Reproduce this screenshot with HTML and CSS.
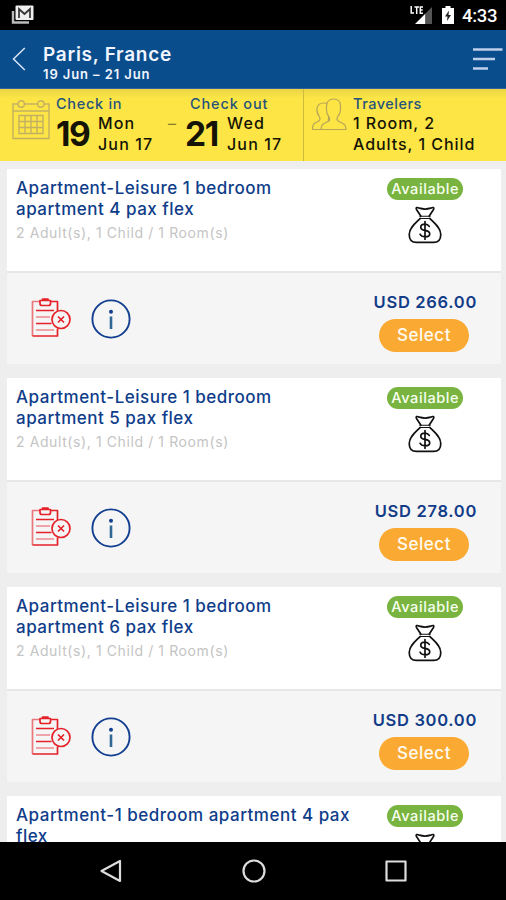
FILE: index.html
```html
<!DOCTYPE html>
<html lang="en">
<head>
<meta charset="utf-8">
<title>Paris, France</title>
<link rel="stylesheet" href="styles.css">
</head>
<body>
<svg class="defs" aria-hidden="true">
  <symbol id="bag" viewBox="0 0 36 40">
    <g fill="none" stroke="#111" stroke-width="1.8" stroke-linejoin="round" stroke-linecap="round">
      <path d="M13.500 10.500 9 3.500C8 1.500 9.500 .8 12 2.200Q18 4 24 2.200C26.500 .8 28 1.500 27 3.500L22.500 10.500"/>
      <path d="M12.500 10.800H23.500M12.500 13.200H23.500" stroke-width="1.100"/>
      <path d="M13 13C8 18 1.300 23 1.300 30Q1.300 38.500 9 38.500H27Q34.700 38.500 34.700 30C34.700 23 28 18 23 13"/>
      <path d="M22.500 21.500Q21 19 18 19Q13.500 19 13.500 22.300Q13.500 24.900 18 25.700Q23 26.500 23 29.500Q23 32.500 18 32.500Q14 32.500 12.800 29.800M18 16.300V35"/>
    </g>
  </symbol>
  <symbol id="policy" viewBox="0 0 40 40">
    <g fill="none" stroke="#e5222a" stroke-width="1.700" stroke-linejoin="round">
      <path d="M26.500 13V3.500H20" />
      <path d="M9 3.500H1.500V38" opacity=".6"/>
      <path d="M1.500 38H26.500V31"/>
      <path d="M9 2.500H19.500V5.500Q19.500 7.500 17.500 7.500H11Q9 7.500 9 5.500ZM11.500 2.500V1H17V2.500"/>
      <path d="M5 12.500H23M5 25.500H20.500"/>
      <path d="M5 19H19M5 32H23" opacity=".5"/>
      <circle cx="30" cy="21.500" r="9"/>
      <path d="M27 18.500 33 24.500M33 18.500 27 24.500"/>
    </g>
  </symbol>
  <symbol id="info" viewBox="0 0 40 40">
    <circle cx="20" cy="20" r="18.600" fill="none" stroke="#123f90" stroke-width="1.900"/>
    <circle cx="20" cy="12.800" r="2" fill="#123f90"/>
    <path d="M20 17.500V30" stroke="#2f6795" stroke-width="2.600"/>
  </symbol>
</svg>
<div class="screen">
  <div class="status">
    <svg class="gmail" viewBox="0 0 24 20">
      <path d="M2 6V17.500H18" fill="none" stroke="#bbb" stroke-width="2.400"/>
      <rect x="4.500" y=".5" width="18" height="14.500" rx="1" fill="#eee"/>
      <path d="M8 13V4L13.500 9 19 4V13" fill="none" stroke="#333" stroke-width="1.700"/>
    </svg>
    <div class="system">
      <svg class="signal" viewBox="0 0 24 20">
        <path d="M5 19 15.500 8.500V19Z" fill="#fff"/><path d="M15.500 8.500 22 2V19H15.500Z" fill="#555"/>
        <path d="M1.200 1V8H4M4.500 2H9M6.700 2V9M13 2H10.300V8.200H13M10.300 5H12.700" fill="none" stroke="#fff" stroke-width="1.500"/>
      </svg>
      <svg class="battery" viewBox="0 0 12 18">
        <path d="M3.500 0H8.500V2H12V18H0V2H3.500Z" fill="#fff"/><path d="M7 4.500 3 10.500H5.500L5 15 9 9H6.500Z" fill="#222"/>
      </svg>
      <span class="clock">4:33</span>
    </div>
  </div>
  <header class="header">
    <svg class="back" viewBox="0 0 14 24"><path d="M12.800 1 1.500 12 12.800 23" fill="none" stroke="#dbe6f4" stroke-width="1.500"/></svg>
    <div class="heading"><h1>Paris, France</h1><p>19 Jun – 21 Jun</p></div>
    <svg class="filter" viewBox="0 0 30 24"><path d="M0 2.500H29.500M0 12H22M0 21.500H15" stroke="#bfd0ea" stroke-width="2.400"/></svg>
  </header>
  <section class="summary">
    <svg class="calendar" viewBox="0 0 38 40">
      <g fill="none" stroke="#c3b163" stroke-width="1.400">
        <path d="M6 4H1V38.500H37V4H32M12.500 4H25.500M1 11H37"/><circle cx="9.200" cy="4" r="3.200"/><circle cx="28.800" cy="4" r="3.200"/>
        <path d="M7 15.500H31V33.500H7ZM7 21.500H31M7 27.500H31M13 15.500V33.500M19 15.500V33.500M25 15.500V33.500"/>
      </g>
    </svg>
    <div class="stay in"><span class="label">Check in</span><div class="date"><b>19</b><span>Mon<br>Jun 17</span></div></div>
    <span class="dash">–</span>
    <div class="stay out"><span class="label">Check out</span><div class="date"><b>21</b><span>Wed<br>Jun 17</span></div></div>
    <div class="guests">
      <svg class="people" viewBox="0 0 36 34">
        <g fill="#fce545" stroke="#b8a55a" stroke-width="1.200" stroke-linejoin="round">
          <path d="M16 31.500H1.500Q1.500 26.500 4 25L8 23Q10 21 8 18Q5.500 15 6 10.500Q6.500 5 13 5Q18 5 19 10Z"/>
          <path d="M10 31.500Q10 26.500 14 25L18 23Q19.500 21 17.500 18Q15 15 15.500 8Q16 1 22.500 1Q29.500 1 29.500 8Q30 15 27 18Q25 21 27 23L31 25Q35 26.500 35 31.500Z"/>
        </g>
      </svg>
      <div class="travel"><span class="label">Travelers</span><p>1 Room, 2<br>Adults, 1 Child</p></div>
    </div>
  </section>
  <main class="list">
    <article class="card">
      <div class="top"><div class="room"><h2>Apartment-Leisure 1 bedroom<br>apartment 4 pax flex</h2><p>2 Adult(s), 1 Child / 1 Room(s)</p></div><div class="state"><span class="badge">Available</span><svg class="bag"><use href="#bag"/></svg></div></div>
      <div class="bottom"><svg class="policy"><use href="#policy"/></svg><svg class="info"><use href="#info"/></svg><div class="buy"><strong>USD 266.00</strong><button>Select</button></div></div>
    </article>
    <article class="card">
      <div class="top"><div class="room"><h2>Apartment-Leisure 1 bedroom<br>apartment 5 pax flex</h2><p>2 Adult(s), 1 Child / 1 Room(s)</p></div><div class="state"><span class="badge">Available</span><svg class="bag"><use href="#bag"/></svg></div></div>
      <div class="bottom"><svg class="policy"><use href="#policy"/></svg><svg class="info"><use href="#info"/></svg><div class="buy"><strong>USD 278.00</strong><button>Select</button></div></div>
    </article>
    <article class="card">
      <div class="top"><div class="room"><h2>Apartment-Leisure 1 bedroom<br>apartment 6 pax flex</h2><p>2 Adult(s), 1 Child / 1 Room(s)</p></div><div class="state"><span class="badge">Available</span><svg class="bag"><use href="#bag"/></svg></div></div>
      <div class="bottom"><svg class="policy"><use href="#policy"/></svg><svg class="info"><use href="#info"/></svg><div class="buy"><strong>USD 300.00</strong><button>Select</button></div></div>
    </article>
    <article class="card">
      <div class="top"><div class="room"><h2>Apartment-1 bedroom apartment 4 pax<br>flex</h2></div><div class="state"><span class="badge">Available</span><svg class="bag"><use href="#bag"/></svg></div></div>
    </article>
  </main>
  <nav class="nav">
    <svg viewBox="0 0 24 24"><path d="M21 2V22L2.500 12Z"/></svg>
    <svg viewBox="0 0 24 24"><circle cx="12" cy="12" r="10.500"/></svg>
    <svg viewBox="0 0 24 24"><rect x="2.500" y="2.500" width="19" height="19"/></svg>
  </nav>
</div>
</body>
</html>
```
FILE: styles.css
```css
* { box-sizing: border-box; }
body { margin: 0; font-family: Inter, "Liberation Sans", sans-serif; white-space: nowrap; }
h1, h2, p { margin: 0; }
svg { display: block; flex: none; }
.defs { display: none; }
.screen { width: 506px; height: 900px; display: flex; flex-direction: column; overflow: hidden; background: #eee; }
.status { height: 30px; flex: none; background: #000; display: flex; justify-content: space-between; padding: 5px 9px 0 11px; }
.gmail { width: 24px; height: 20px; }
.system { display: flex; color: #fff; }
.signal { width: 24px; height: 20px; margin-right: 8px; }
.battery { width: 12px; height: 18px; margin: 1px 8px 0 0; }
.clock { width: 35px; font: 500 18.500px/22px Roboto, sans-serif; letter-spacing: -.3px; }
.header { height: 59px; flex: none; background: #0a4d8c; display: flex; color: #f0f5ff; padding: 0 3px 0 12px; border-bottom: 1px solid #31619a; }
.back { width: 14px; height: 24px; margin: 17px 17px 0 0; }
.heading { flex: 1; padding-top: 13px; }
.heading h1 { font-size: 19px; line-height: 23px; font-weight: 600; letter-spacing: .72px; }
.heading p { font-size: 13px; line-height: 17px; font-weight: 600; letter-spacing: .9px; }
.filter { width: 30px; height: 24px; margin-top: 17px; }
.summary { height: 72px; flex: none; display: flex; background: linear-gradient(#ead446, #fce545 9px); padding: 0 0 0 12px; color: #141306; }
.calendar { width: 38px; height: 40px; margin: 11px 6px 0 0; }
.label { display: block; color: #27527c; font-size: 14.500px; line-height: 18px; font-weight: 500; letter-spacing: .7px; }
.stay { padding-top: 6px; width: 112px; }
.stay.out { width: 118px; }
.out .label { margin-left: 5px; letter-spacing: .85px; }
.travel .label { letter-spacing: .5px; }
.date { display: flex; font-size: 16px; line-height: 21px; font-weight: 500; letter-spacing: 1.150px; }
.date b { font-size: 33.500px; line-height: 42px; width: 42px; letter-spacing: -1.400px; }
.dash { width: 17px; padding-top: 24px; line-height: 20px; color: #877e32; }
.guests { flex: 1; display: flex; border-left: 1px solid #cdbb3e; padding-left: 7px; }
.people { width: 36px; height: 34px; margin: 9px 6px 0 0; }
.travel { padding-top: 6px; }
.travel p { font-size: 16px; line-height: 21px; font-weight: 500; letter-spacing: .95px; }
.list { flex: 1; min-height: 0; overflow: hidden; padding: 8px 5px 0 7px; }
.card { width: 494px; height: 195px; margin-bottom: 14px; background: #f5f5f5; }
.top { height: 104px; background: #fff; border-bottom: 2px solid #e7e7e7; display: flex; justify-content: space-between; padding: 9px 38px 0 9px; }
.room h2 { color: #0f3d8a; font-size: 17px; line-height: 21px; font-weight: 500; letter-spacing: .5px; }
.room p { color: #c4c4c4; font-size: 14px; line-height: 18px; margin-top: 4px; letter-spacing: .6px; }
.state { width: 76px; display: flex; flex-direction: column; align-items: center; }
.badge { width: 76px; height: 22px; border-radius: 11px; background: #78b43f; color: #f8fff0; font-size: 14.500px; line-height: 22px; font-weight: 500; text-align: center; letter-spacing: .6px; text-indent: .6px; }
.bag { width: 34px; height: 38px; margin-top: 6px; }
.bottom { height: 91px; display: flex; padding: 0 24px 0 24px; }
.policy { width: 40px; height: 40px; margin: 25px 20px 0 0; }
.info { width: 40px; height: 40px; margin-top: 26px; }
.buy { flex: 1; display: flex; flex-direction: column; align-items: flex-end; padding-top: 18px; }
.buy strong { color: #123c88; font-size: 16.500px; line-height: 22px; font-weight: 600; letter-spacing: .7px; }
button { width: 90px; height: 33px; margin: 6px 8px 0 0; border: 0; border-radius: 17px; padding: 0; background: #faaa32; color: #fffaf0; font: 500 17px/33px Inter, sans-serif; letter-spacing: .55px; }
.nav { height: 58px; flex: none; background: #000; display: flex; justify-content: space-between; padding: 17px 98px 0 99px; }
.nav svg { width: 24px; height: 24px; fill: none; stroke: #ddd; stroke-width: 2.200; stroke-linejoin: round; }
```
